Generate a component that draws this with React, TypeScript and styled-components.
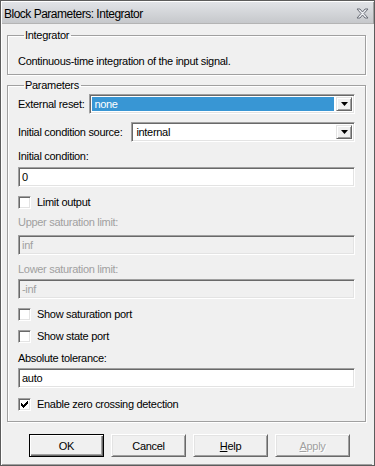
import React from "react";
import styled, { createGlobalStyle } from "styled-components";

const Global = createGlobalStyle`
  html, body { margin: 0; padding: 0; background: #f0f0f0; }
  * { box-sizing: border-box; }
`;

const Window = styled.div`
  width: 375px;
  height: 466px;
  display: flex;
  flex-direction: column;
  background: #f0f0f0;
  border: 1px solid #5c5c5c;
  box-shadow: inset 1px 1px 0 #ffffff, inset -1px -1px 0 #a0a0a0;
  font-family: "Liberation Sans", Arial, sans-serif;
  font-size: 11px;
  letter-spacing: -0.3px;
  color: #000;
`;

const TitleBar = styled.div`
  height: 22px;
  margin: 1px 1px 0 1px;
  display: flex;
  align-items: center;
  justify-content: space-between;
  padding: 2px 4px 0 2px;
  background: linear-gradient(#e1e3e7, #c6c8cb);
  border-bottom: 1px solid #b4b4b4;
  font-size: 12px;
  letter-spacing: -0.5px;
`;

const CloseIcon = () => (
  <svg width="13" height="11" viewBox="0 0 13 11">
    <path
      d="M1 1h3l2.5 3 2.5-3h3l-4 4.5 4 4.5h-3l-2.5-3-2.5 3h-3l4-4.5z"
      fill="#eceef2"
      stroke="#6b6f78"
      strokeWidth="1"
    />
  </svg>
);

const Body = styled.div`
  flex: 1;
  display: flex;
  flex-direction: column;
  padding: 5px 6px 0 6px;
  border-right: 2px solid #f0f0f0;
`;

const Group = styled.fieldset<{ $pt: number; $pb: number; $mt: number }>`
  margin: ${(p) => p.$mt}px 0 0 0;
  padding: ${(p) => p.$pt}px 10px ${(p) => p.$pb}px 10px;
  border: 1px solid #a0a0a0;
  box-shadow: 1px 1px 0 #ffffff, inset 1px 1px 0 #ffffff;
  min-width: 0;
  display: flex;
  flex-direction: column;
`;

const Legend = styled.legend`
  padding: 0 2px 0 1px;
  margin-left: 6px;
  line-height: 13px;
`;

const Text = styled.div<{ $mt?: number; $disabled?: boolean }>`
  line-height: 13px;
  margin-top: ${(p) => p.$mt ?? 0}px;
  color: ${(p) => (p.$disabled ? "#a0a0a0" : "#000")};
  white-space: nowrap;
`;

const Row = styled.div<{ $mt?: number; $gap?: number }>`
  display: flex;
  align-items: center;
  gap: ${(p) => p.$gap ?? 5}px;
  margin-top: ${(p) => p.$mt ?? 0}px;
`;

const Select = styled.div`
  flex: 1;
  height: 20px;
  display: flex;
  align-items: stretch;
  background: #fff;
  border-top: 1px solid #a0a0a0;
  border-left: 1px solid #a0a0a0;
  border-right: 1px solid #ffffff;
  border-bottom: 1px solid #ffffff;
  box-shadow: inset 1px 1px 0 #696969, inset -1px -1px 0 #e3e3e3;
  padding: 2px;
`;

const SelectValue = styled.div<{ $selected?: boolean }>`
  flex: 1;
  display: flex;
  align-items: center;
  padding-left: 2px;
  margin-right: 2px;
  background: ${(p) => (p.$selected ? "#3896d4" : "transparent")};
  color: ${(p) => (p.$selected ? "#fff" : "#000")};
`;

const ArrowButton = styled.div`
  width: 16px;
  display: flex;
  align-items: center;
  justify-content: center;
  background: #f0f0f0;
  border-top: 1px solid #e3e3e3;
  border-left: 1px solid #e3e3e3;
  border-right: 1px solid #696969;
  border-bottom: 1px solid #696969;
  box-shadow: inset 1px 1px 0 #ffffff, inset -1px -1px 0 #a0a0a0;
`;

const Arrow = () => (
  <svg width="7" height="4" viewBox="0 0 7 4">
    <path d="M0 0h7L3.5 4z" fill="#000" />
  </svg>
);

const Input = styled.div<{ $mt?: number; $disabled?: boolean }>`
  height: 20px;
  margin-top: ${(p) => p.$mt ?? 0}px;
  display: flex;
  align-items: center;
  padding-left: 3px;
  background: ${(p) => (p.$disabled ? "#f0f0f0" : "#fff")};
  color: ${(p) => (p.$disabled ? "#a0a0a0" : "#000")};
  border-top: 1px solid #a0a0a0;
  border-left: 1px solid #a0a0a0;
  border-right: 1px solid #ffffff;
  border-bottom: 1px solid #ffffff;
  box-shadow: inset 1px 1px 0 #696969, inset -1px -1px 0 #e3e3e3;
`;

const CheckRow = styled.div<{ $mt?: number }>`
  display: flex;
  align-items: center;
  gap: 6px;
  height: 13px;
  margin-top: ${(p) => p.$mt ?? 0}px;
`;

const Box = styled.div`
  width: 13px;
  height: 13px;
  background: #fff;
  border-top: 1px solid #a0a0a0;
  border-left: 1px solid #a0a0a0;
  border-right: 1px solid #ffffff;
  border-bottom: 1px solid #ffffff;
  box-shadow: inset 1px 1px 0 #696969, inset -1px -1px 0 #e3e3e3;
  display: flex;
  align-items: center;
  justify-content: center;
`;

const Check = () => (
  <svg width="7" height="7" viewBox="0 0 7 7" shapeRendering="crispEdges">
    <path d="M0 2h1v1h1v1h1V3h1V2h1V1h1V0h1v3H6v1H5v1H4v1H3v1H2V6H1V5H0z" fill="#000" />
  </svg>
);

const CheckLabel = styled.span`
  line-height: 13px;
`;

const Buttons = styled.div`
  display: flex;
  gap: 7px;
  padding-left: 22px;
  margin-top: 12px;
`;

const Button = styled.div<{ $default?: boolean; $disabled?: boolean }>`
  width: 75px;
  height: 23px;
  display: flex;
  align-items: center;
  justify-content: center;
  font-size: 11px;
  background: #f0f0f0;
  color: ${(p) => (p.$disabled ? "#a0a0a0" : "#000")};
  text-shadow: ${(p) => (p.$disabled ? "1px 1px 0 #fff" : "none")};
  ${(p) =>
    p.$default
      ? `border: 1px solid #000; box-shadow: inset 1px 1px 0 #fff, inset -1px -1px 0 #696969, inset -2px -2px 0 #a0a0a0;`
      : `border: 1px solid; border-color: #fff #696969 #696969 #fff; box-shadow: inset 1px 1px 0 #e3e3e3, inset -1px -1px 0 #a0a0a0;`}
`;

const U = styled.span`
  text-decoration: underline;
`;

export default function App() {
  return (
    <>
      <Global />
      <Window>
        <TitleBar>
          <span>Block Parameters: Integrator</span>
          <CloseIcon />
        </TitleBar>
        <Body>
          <Group $pt={13} $pb={6} $mt={0}>
            <Legend>Integrator</Legend>
            <Text>Continuous-time integration of the input signal.</Text>
          </Group>
          <Group $pt={2} $pb={10} $mt={4}>
            <Legend>Parameters</Legend>
            <Row>
              <Text>External reset:</Text>
              <Select>
                <SelectValue $selected>none</SelectValue>
                <ArrowButton>
                  <Arrow />
                </ArrowButton>
              </Select>
            </Row>
            <Row $mt={8} $gap={9}>
              <Text>Initial condition source:</Text>
              <Select>
                <SelectValue>internal</SelectValue>
                <ArrowButton>
                  <Arrow />
                </ArrowButton>
              </Select>
            </Row>
            <Text $mt={8}>Initial condition:</Text>
            <Input $mt={4}>0</Input>
            <CheckRow $mt={9}>
              <Box />
              <CheckLabel>Limit output</CheckLabel>
            </CheckRow>
            <Text $mt={7} $disabled>
              Upper saturation limit:
            </Text>
            <Input $mt={6} $disabled>
              inf
            </Input>
            <Text $mt={8} $disabled>
              Lower saturation limit:
            </Text>
            <Input $mt={3} $disabled>
              -inf
            </Input>
            <CheckRow $mt={9}>
              <Box />
              <CheckLabel>Show saturation port</CheckLabel>
            </CheckRow>
            <CheckRow $mt={9}>
              <Box />
              <CheckLabel>Show state port</CheckLabel>
            </CheckRow>
            <Text $mt={9}>Absolute tolerance:</Text>
            <Input $mt={3}>auto</Input>
            <CheckRow $mt={10}>
              <Box>
                <Check />
              </Box>
              <CheckLabel>Enable zero crossing detection</CheckLabel>
            </CheckRow>
          </Group>
          <Buttons>
            <Button $default>OK</Button>
            <Button>Cancel</Button>
            <Button>
              <U>H</U>elp
            </Button>
            <Button $disabled>
              <U>A</U>pply
            </Button>
          </Buttons>
        </Body>
      </Window>
    </>
  );
}
